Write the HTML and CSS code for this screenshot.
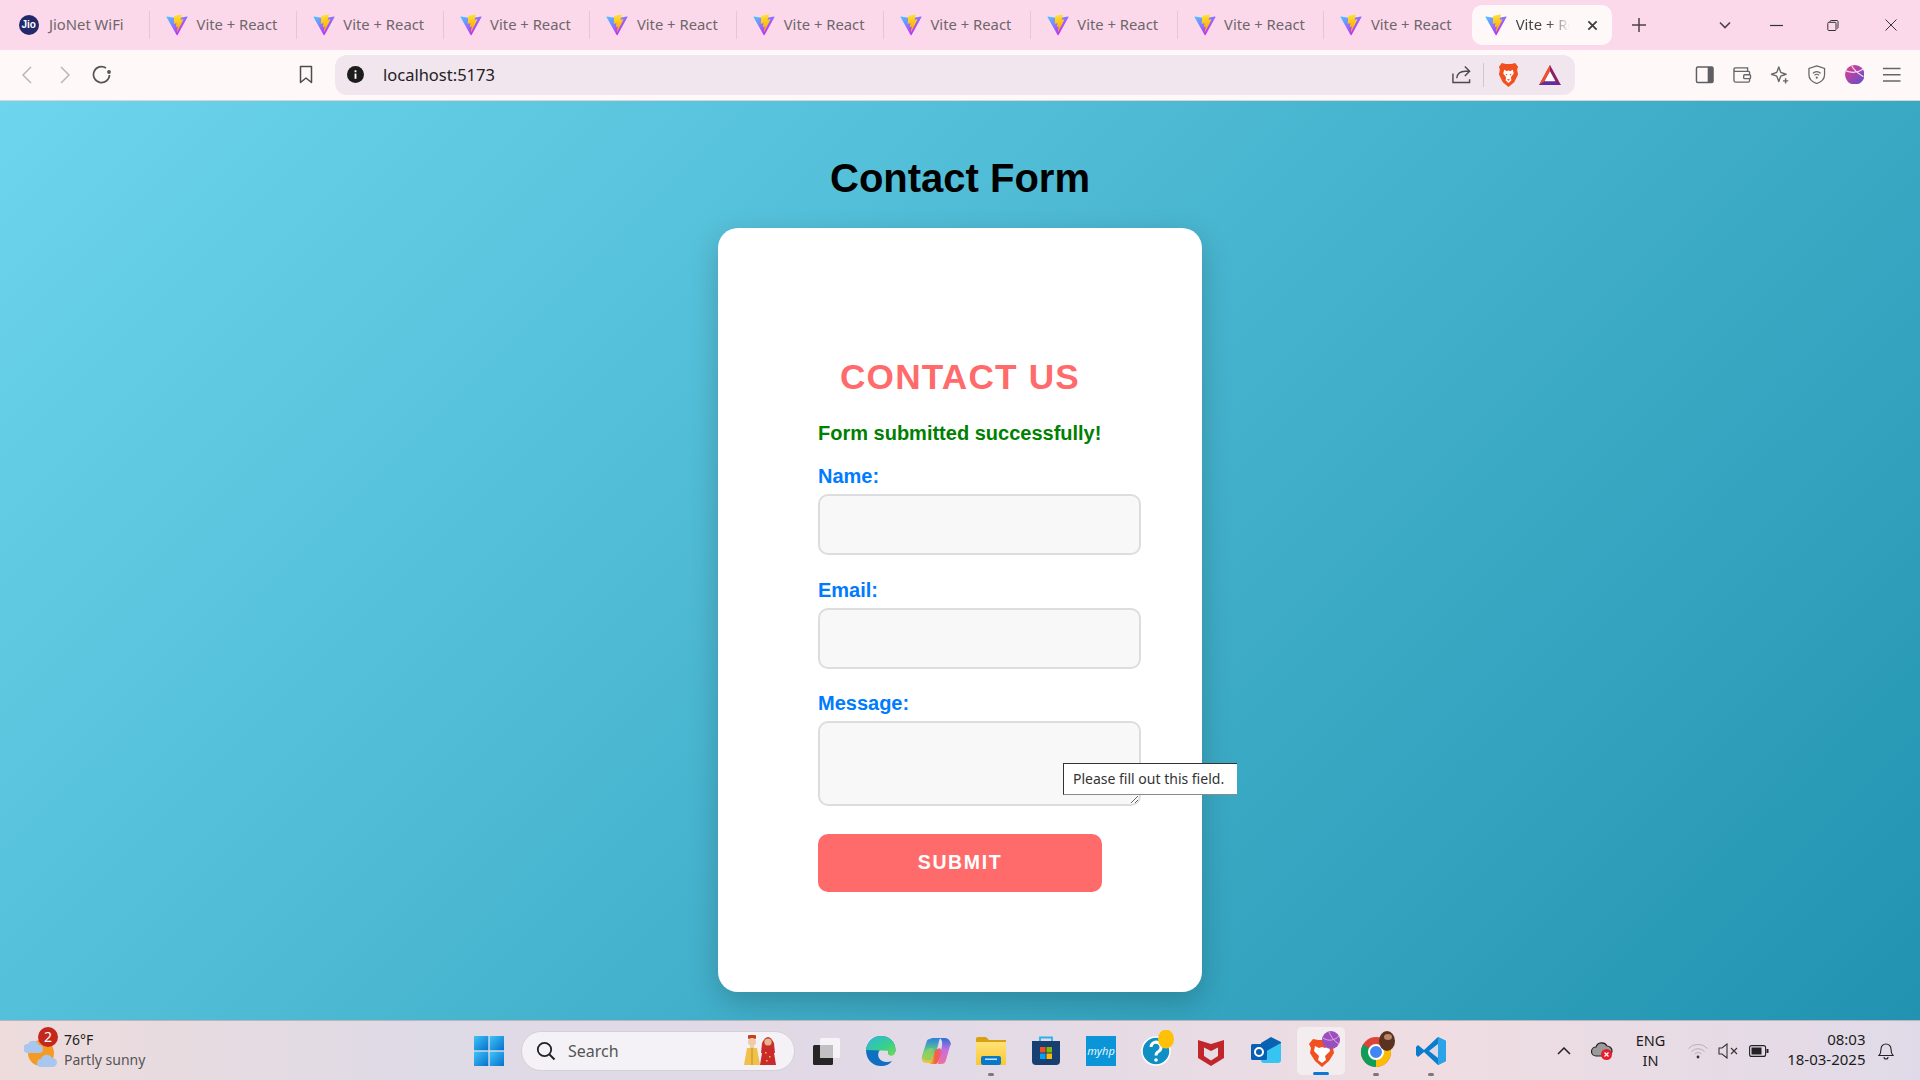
FILE: index.html
```
<!DOCTYPE html>
<html lang="en">
<head>
<meta charset="utf-8">
<title>Vite + React</title>
<link rel="stylesheet" href="styles.css">
</head>
<body>
<svg class="defs" width="0" height="0" aria-hidden="true">
  <defs>
    <linearGradient id="vA" gradientUnits="userSpaceOnUse" x1="6" y1="33" x2="235" y2="344"><stop offset="0" stop-color="#41d1ff"/><stop offset="1" stop-color="#bd34fe"/></linearGradient>
    <linearGradient id="vB" gradientUnits="userSpaceOnUse" x1="194" y1="8" x2="236" y2="292"><stop offset="0" stop-color="#ffea83"/><stop offset=".08" stop-color="#ffdd35"/><stop offset="1" stop-color="#ffa800"/></linearGradient>
    <linearGradient id="edgeG" x1="0" y1="0" x2="1" y2="1"><stop offset="0" stop-color="#2ab7e0"/><stop offset=".6" stop-color="#39d08a"/><stop offset="1" stop-color="#7ad94a"/></linearGradient>
    <linearGradient id="copL" x1="0" y1="0" x2="0" y2="1"><stop offset="0" stop-color="#2b7fe0"/><stop offset=".5" stop-color="#5fc88a"/><stop offset="1" stop-color="#f2c53d"/></linearGradient>
    <linearGradient id="copR" x1="0" y1="0" x2="0" y2="1"><stop offset="0" stop-color="#2a6fd8"/><stop offset=".45" stop-color="#c56ee0"/><stop offset="1" stop-color="#f0709a"/></linearGradient>
    <linearGradient id="copB" x1="0" y1="0" x2="1" y2="0"><stop offset="0" stop-color="#f2c53d"/><stop offset=".5" stop-color="#f4613a"/><stop offset="1" stop-color="#e85a9a"/></linearGradient>
    <linearGradient id="winG" x1="0" y1="0" x2="1" y2="1"><stop offset="0" stop-color="#3fc4f8"/><stop offset="1" stop-color="#0670cc"/></linearGradient>
    <linearGradient id="avG" x1="0" y1="0" x2="1" y2="1"><stop offset="0" stop-color="#e83e8c"/><stop offset="1" stop-color="#5a4fd0"/></linearGradient>
    <linearGradient id="folG" x1="0" y1="0" x2="0" y2="1"><stop offset="0" stop-color="#ffe27a"/><stop offset="1" stop-color="#fbc72e"/></linearGradient>
    <symbol id="vite" viewBox="0 0 410 404">
      <path d="M399.641 59.5246L215.643 388.545C211.844 395.338 202.084 395.378 198.228 388.618L10.5817 59.5563C6.38087 52.1896 12.6802 43.2665 21.0281 44.7586L205.223 77.6824C206.398 77.8924 207.601 77.8904 208.776 77.6763L389.119 44.8058C397.439 43.2894 403.768 52.1434 399.641 59.5246Z" fill="url(#vA)"/>
      <path d="M292.965 1.5744L156.801 28.2552C154.563 28.6937 152.906 30.5903 152.771 32.8664L144.395 174.33C144.198 177.662 147.258 180.248 150.51 179.498L188.42 170.749C191.967 169.931 195.172 173.055 194.443 176.622L183.18 231.775C182.422 235.487 185.907 238.661 189.532 237.56L212.947 230.446C216.577 229.344 220.065 232.527 219.297 236.242L201.398 322.875C200.278 328.294 207.486 331.249 210.492 326.603L212.5 323.5L323.454 102.072C325.312 98.3645 322.108 94.137 318.036 94.9228L279.014 102.454C275.347 103.161 272.227 99.746 273.262 96.1583L298.731 7.86689C299.767 4.27314 296.636 0.855181 292.965 1.5744Z" fill="url(#vB)"/>
    </symbol>
  </defs>
</svg>

<header class="tabstrip">
  <div class="tab tab-first">
    <svg class="fav" viewBox="0 0 20 20"><circle cx="10" cy="10" r="10" fill="#23286b"/></svg>
    <span class="jio">Jio</span>
    <span class="tab-title tab-title-jio">JioNet WiFi</span>
  </div>
  <div class="tab"><svg class="fav"><use href="#vite"/></svg><span class="tab-title">Vite + React</span></div>
  <div class="tab"><svg class="fav"><use href="#vite"/></svg><span class="tab-title">Vite + React</span></div>
  <div class="tab"><svg class="fav"><use href="#vite"/></svg><span class="tab-title">Vite + React</span></div>
  <div class="tab"><svg class="fav"><use href="#vite"/></svg><span class="tab-title">Vite + React</span></div>
  <div class="tab"><svg class="fav"><use href="#vite"/></svg><span class="tab-title">Vite + React</span></div>
  <div class="tab"><svg class="fav"><use href="#vite"/></svg><span class="tab-title">Vite + React</span></div>
  <div class="tab"><svg class="fav"><use href="#vite"/></svg><span class="tab-title">Vite + React</span></div>
  <div class="tab"><svg class="fav"><use href="#vite"/></svg><span class="tab-title">Vite + React</span></div>
  <div class="tab tab-last"><svg class="fav"><use href="#vite"/></svg><span class="tab-title">Vite + React</span></div>
  <div class="tab-active">
    <svg class="fav"><use href="#vite"/></svg>
    <span class="tab-title tab-title-active">Vite + React</span>
    <svg class="tab-x" viewBox="0 0 12 12"><path d="M1.5 1.5 L10.5 10.5 M10.5 1.5 L1.5 10.5" stroke="#3c3c3c" stroke-width="1.9" fill="none"/></svg>
  </div>
  <svg class="newtab" viewBox="0 0 14 14"><path d="M7 0 V14 M0 7 H14" stroke="#4a4347" stroke-width="1.5"/></svg>
  <div class="winctl">
    <svg class="wc wc-chev" viewBox="0 0 12 8"><path d="M1 1.5 L6 6.5 L11 1.5" stroke="#4a4347" stroke-width="1.6" fill="none"/></svg>
    <svg class="wc wc-min" viewBox="0 0 12 12"><path d="M0 6 H12" stroke="#333" stroke-width="1.1"/></svg>
    <svg class="wc wc-max" viewBox="0 0 12 12"><path d="M3 2.5 V2 a1.2 1.2 0 0 1 1.2 -1 H10 a1.2 1.2 0 0 1 1 1 V8 a1.2 1.2 0 0 1 -1 1 M1.8 2.8 H8 a1 1 0 0 1 1 1 V10 a1 1 0 0 1 -1 1 H1.8 a1 1 0 0 1 -1 -1 V3.8 a1 1 0 0 1 1 -1 Z" stroke="#333" stroke-width="1" fill="none"/></svg>
    <svg class="wc wc-close" viewBox="0 0 12 12"><path d="M0.5 0.5 L11.5 11.5 M11.5 0.5 L0.5 11.5" stroke="#333" stroke-width="1" fill="none"/></svg>
  </div>
</header>

<nav class="toolbar">
  <svg class="tb tb-back" viewBox="0 0 10 18"><path d="M9 1 L1 9 L9 17" stroke="#b9b3b5" stroke-width="1.5" fill="none"/></svg>
  <svg class="tb tb-fwd" viewBox="0 0 10 18"><path d="M1 1 L9 9 L1 17" stroke="#b9b3b5" stroke-width="1.5" fill="none"/></svg>
  <svg class="tb tb-reload" viewBox="0 0 20 20"><path d="M17.5 10 A8 8 0 1 1 14 3" stroke="#555" stroke-width="1.7" fill="none"/><circle cx="17" cy="7" r="1.9" fill="#555"/></svg>
  <svg class="tb tb-mark" viewBox="0 0 14 18"><path d="M1.5 1 H12.5 V17 L7 12.5 L1.5 17 Z" stroke="#4d4d4d" stroke-width="1.5" fill="none" stroke-linejoin="round"/></svg>
  <div class="omnibox">
    <svg class="info" viewBox="0 0 18 18"><circle cx="9" cy="9" r="9" fill="#1c1c1c"/><rect x="8" y="8" width="2" height="5.5" fill="#fff"/><rect x="8" y="4.6" width="2" height="2" fill="#fff"/></svg>
    <span class="url">localhost:5173</span>
    <svg class="share" viewBox="0 0 20 20"><path d="M1 9 V18.500 H18.500 V15 M5 14 C5.500 9 9 6.500 14 6.500 H18 M13.500 1.500 L18.500 6.500 L13.500 11.500" stroke="#4a4a4a" stroke-width="1.500" fill="none"/></svg>
    <span class="omni-sep"></span>
    <svg class="brave" viewBox="0 0 22 26"><path d="M4 1 L8 2 H14 L18 1 L21 5 L20 8 L21 13 L17 21 L11 26 L5 21 L1 13 L2 8 L1 5 Z" fill="#f1501f"/><path d="M6.500 8 L9.500 9.500 L11 8.500 L12.500 9.500 L15.500 8 L16.500 12 L13.500 16 L14 19 L11 22 L8 19 L8.500 16 L5.500 12 Z" fill="#fff"/><path d="M9.300 18 H12.700 L11 19.700 Z M8 12 L10 13 L8.500 14 Z M14 12 L12 13 L13.500 14 Z" fill="#f1501f"/></svg>
    <svg class="bat" viewBox="0 0 24 22"><path d="M12 0 L24 22 H0 Z" fill="#8f1f66"/><path d="M12 0 L0 22 L6 18 L12 7 Z" fill="#f0502c"/><path d="M0 22 L6 18 H18 L24 22 Z" fill="#5f2fa0"/><path d="M12 7 L18 18 H6 Z" fill="#fff"/></svg>
  </div>
  <div class="tb-right">
    <svg class="tr" viewBox="0 0 20 20"><rect x="1.500" y="2" width="17" height="16" rx="1.500" stroke="#5f5f63" stroke-width="1.500" fill="none"/><rect x="13" y="2" width="5.500" height="16" fill="#5f5f63"/></svg>
    <svg class="tr" viewBox="0 0 20 20"><path d="M2 5 V16 a1.500 1.500 0 0 0 1.500 1.500 H17 a1.500 1.500 0 0 0 1 -1.500 V7.500 a1 1 0 0 0 -1 -1 H3.500 a1.500 1.500 0 0 1 -1.500 -1.500 a1.500 1.500 0 0 1 1.500 -2 H16 V6.500" stroke="#66666a" stroke-width="1.400" fill="none"/><rect x="12" y="10" width="7" height="4" rx="1" stroke="#66666a" stroke-width="1.400" fill="#fff8f8"/></svg>
    <svg class="tr" viewBox="0 0 20 20"><path d="M9 2 L11 7.500 L16.500 9.500 L11 11.500 L9 17 L7 11.500 L1.500 9.500 L7 7.500 Z" stroke="#66666a" stroke-width="1.400" fill="none" stroke-linejoin="round"/><path d="M16 13.500 V19 M13.300 16.300 H18.700" stroke="#66666a" stroke-width="1.500"/></svg>
    <svg class="tr" viewBox="0 0 20 20"><path d="M10 1 L18 3.500 V10 C18 14.500 14.500 17.500 10 19 C5.500 17.500 2 14.500 2 10 V3.500 Z" stroke="#66666a" stroke-width="1.300" fill="none"/><path d="M6 8.500 a5.500 5.500 0 0 1 8 0 M7.700 10.600 a3 3 0 0 1 4.600 0" stroke="#66666a" stroke-width="1.200" fill="none"/><circle cx="10" cy="13" r="1.100" fill="#66666a"/></svg>
    <svg class="tr" viewBox="0 0 20 20"><circle cx="10" cy="10" r="10" fill="url(#avG)"/><path d="M1 6 C6 8 13 8 19 4 M7 1 C9 5 14 9 19 12" stroke="#fbdcea" stroke-width="1.200" fill="none"/></svg>
    <svg class="tr" viewBox="0 0 20 20"><path d="M1 3.500 H19 M1 10 H19 M1 16.500 H19" stroke="#66666a" stroke-width="1.500"/></svg>
  </div>
</nav>

<main class="page">
  <h1 class="page-title">Contact Form</h1>
  <section class="card">
    <h2 class="card-title">CONTACT US</h2>
    <p class="success">Form submitted successfully!</p>
    <form class="form">
      <div class="field">
        <label class="label" for="f-name">Name:</label>
        <input class="input" id="f-name" type="text">
      </div>
      <div class="field">
        <label class="label" for="f-email">Email:</label>
        <input class="input" id="f-email" type="email">
      </div>
      <div class="field field-msg">
        <label class="label" for="f-msg">Message:</label>
        <div class="msg-wrap">
          <textarea class="input textarea" id="f-msg"></textarea>
          <div class="tooltip">Please fill out this field.</div>
        </div>
      </div>
      <button class="submit" type="button">SUBMIT</button>
    </form>
  </section>
</main>

<footer class="taskbar">
  <div class="weather">
    <div class="w-icon">
      <svg viewBox="0 0 34 36" width="34" height="36">
        <circle cx="17" cy="20" r="13" fill="#f59a23"/>
        <path d="M3 20 a4.500 4.500 0 0 1 1 -9 a6 6 0 0 1 11 1 a4 4 0 0 1 0 8 Z" fill="#a9c6ee"/>
        <path d="M17 34 a4 4 0 0 1 0 -8 a6 6 0 0 1 11 -1 a4.500 4.500 0 0 1 1 9 Z" fill="#a9c6ee"/>
      </svg>
      <span class="w-badge">2</span>
    </div>
    <div class="w-text">
      <div class="w-temp">76°F</div>
      <div class="w-desc">Partly sunny</div>
    </div>
  </div>
  <div class="tb-center">
    <svg class="winlogo" viewBox="0 0 30 30">
      <rect x="0" y="0" width="14.300" height="14.300" fill="url(#winG)"/>
      <rect x="15.700" y="0" width="14.300" height="14.300" fill="url(#winG)"/>
      <rect x="0" y="15.700" width="14.300" height="14.300" fill="url(#winG)"/>
      <rect x="15.700" y="15.700" width="14.300" height="14.300" fill="url(#winG)"/>
    </svg>
    <div class="search">
      <svg class="s-icon" viewBox="0 0 20 20"><circle cx="8.500" cy="8.500" r="6.700" stroke="#222" stroke-width="1.800" fill="none"/><path d="M13.500 13.500 L18.500 18.500" stroke="#222" stroke-width="2"/></svg>
      <span class="s-text">Search</span>
      <svg class="s-art" viewBox="0 0 34 32">
        <rect x="5" y="0" width="8" height="4" rx="1" fill="#c8401a"/>
        <circle cx="9" cy="7" r="4" fill="#f0cba8"/>
        <rect x="7" y="11" width="4" height="3" fill="#f0cba8"/>
        <path d="M4 13 H14 L17 30 H1 Z" fill="#efc04a"/>
        <path d="M8.300 13 H9.700 V30 H8.300 Z" fill="#d89a2a"/>
        <path d="M19 8 Q25 -4 31 8 L32 18 H18 Z" fill="#c93030"/>
        <circle cx="25" cy="7" r="3.600" fill="#e8b48e"/>
        <path d="M20 12 H30 L33 30 H17 Z" fill="#cb2a2a"/>
        <path d="M22 17 h1.500 v1.500 h-1.500 Z M26 21 h1.500 v1.500 h-1.500 Z M23 25 h1.500 v1.500 h-1.500 Z" fill="#f2c24a"/>
      </svg>
    </div>
    <div class="apps">
      <div class="app">
        <svg viewBox="0 0 30 30" class="ai"><rect x="2" y="9" width="20" height="20" rx="1.500" fill="#252525"/><rect x="9" y="2" width="20" height="20" rx="1.500" fill="#f5f3f5"/><rect x="9" y="9" width="13" height="13" fill="#c2c0c2"/></svg>
      </div>
      <div class="app">
        <svg viewBox="0 0 30 30" class="ai"><path d="M29.500 15 C30 6 23 0 15 0 C7 0 1 6 0 14 C0 24 7 30 15 30 C20 30 24 28 26 25 C21 27 15 26 13 22 C11 18 13 13 17 12 C21 12 23 15 22 18 H28 Z" fill="#0f6fc0"/><path d="M0 14 C3 5 15 3 22 9 C26 12 29 14 29 16 C29 20 24 21 22 18 C23 15 21 12 17 12 C10 10 4 10 0 14 Z M0 14 C1 6 7 0 15 0 C23 0 30 6 29.500 15 Z" fill="url(#edgeG)"/></svg>
      </div>
      <div class="app">
        <svg viewBox="0 0 30 30" class="ai"><path d="M9 3 C7 3 6 4 5.500 6 L1 20 C0 24 2 27 5 27 H10 C12 27 13 26 13.500 24 L18 5 C18.500 3 19 2 21 2 H11 Z" fill="url(#copL)"/><path d="M21 2 H24 C27 2 29 4 30 8 L29 10 L25 24 C24 27 23 28 20 28 H17 L21 10 C21.500 6 21 4 19 2 Z" fill="url(#copR)"/><path d="M14 14 L19 12 L21 16 L17.500 25 C17 27 16 28 14 28 H8 C10 27 11 26 11.500 24 Z" fill="url(#copB)"/><path d="M2 18 C4 14 7 12 12 12 L10 24 H4 Z" fill="#8ed25a" opacity=".75"/></svg>
      </div>
      <div class="app">
        <svg viewBox="0 0 30 30" class="ai"><path d="M0 2.500 Q0 1 2 1 H10 L13 4 H30 V10 H0 Z" fill="#d9a012"/><path d="M0 6 H30 V29 H0 Z" fill="url(#folG)"/><rect x="5" y="20" width="20" height="9" rx="2" fill="#0a78c8"/><rect x="9" y="22.500" width="12" height="1.500" fill="#bfe3fa"/></svg>
        <span class="dot"></span>
      </div>
      <div class="app">
        <svg viewBox="0 0 30 30" class="ai"><path d="M9 6 V1.500 H21 V6" stroke="#27b4ec" stroke-width="1.800" fill="none"/><path d="M1 5 H29 V25 a4 4 0 0 1 -4 4 H5 a4 4 0 0 1 -4 -4 Z" fill="#173f72"/><rect x="9" y="11" width="5.500" height="5.500" fill="#f25022"/><rect x="15.500" y="11" width="5.500" height="5.500" fill="#7fba00"/><rect x="9" y="17.500" width="5.500" height="5.500" fill="#01a4ef"/><rect x="15.500" y="17.500" width="5.500" height="5.500" fill="#ffb902"/></svg>
      </div>
      <div class="app">
        <div class="myhp">myhp</div>
      </div>
      <div class="app">
        <svg viewBox="0 0 34 36" class="ai ai-help"><circle cx="15" cy="21" r="14" fill="#0f8fc4" stroke="#fff" stroke-width="1.500"/><path d="M10 17 a5 5 0 1 1 7.500 4.500 c-2 1 -2.500 2 -2.500 4" stroke="#fff" stroke-width="3" fill="none"/><circle cx="15" cy="30" r="1.800" fill="#fff"/><ellipse cx="25" cy="9" rx="8" ry="9.500" fill="#ffc107"/></svg>
      </div>
      <div class="app">
        <svg viewBox="0 0 30 30" class="ai"><path d="M2 4 L15 8 L28 4 V22 L15 30 L2 22 Z" fill="#c0272d"/><path d="M8 11.500 L15 15 L22 11.500 V20 L15 24.500 L8 20 Z" fill="#e6dde4"/></svg>
      </div>
      <div class="app">
        <svg viewBox="0 0 30 30" class="ai"><path d="M10 7 L20 1 L30 6 V13 L10 24 Z" fill="#0a62b0"/><path d="M10 18 L30 7 V24 a3 3 0 0 1 -3 3 H13 a3 3 0 0 1 -3 -3 Z" fill="#36c4f2"/><rect x="0" y="8" width="16" height="16" rx="1.500" fill="#0a5fb4"/><circle cx="8" cy="16" r="4" stroke="#fff" stroke-width="2" fill="none"/></svg>
      </div>
      <div class="app app-active">
        <svg viewBox="0 0 36 36" class="ai ai-wide"><path d="M8 8 L13 9 H21 L26 8 L30 13 L28 17 L29 22 L24 30 L17 36 L10 30 L5 22 L6 17 L4 13 Z" fill="#f1501f"/><path d="M10 15 L14 17 L17 16 L20 17 L24 15 L25 20 L20 25 L21 29 L17 32 L13 29 L14 25 L9 20 Z" fill="#fff"/><circle cx="26" cy="9" r="9" fill="#9a4fc0"/><path d="M18 7 C24 11 30 9 34 5 M24 1 C26 6 30 11 34 13" stroke="#e6a3d8" stroke-width="1" fill="none"/></svg>
        <span class="dash"></span>
      </div>
      <div class="app">
        <svg viewBox="0 0 36 36" class="ai ai-wide"><circle cx="16" cy="21" r="15" fill="#db4437"/><path d="M16 21 L29 13.500 A15 15 0 0 1 16 36 Z" fill="#fbbc05"/><path d="M16 21 L16 36 A15 15 0 0 1 3 13.500 Z" fill="#0f9d58"/><circle cx="16" cy="21" r="7" fill="#4285f4" stroke="#fff" stroke-width="2"/><ellipse cx="27" cy="10" rx="8" ry="10" fill="#5a3320"/><ellipse cx="28" cy="6" rx="4" ry="3" fill="#b8876a"/></svg>
        <span class="dot"></span>
      </div>
      <div class="app">
        <svg viewBox="0 0 30 30" class="ai"><path d="M22 1 L30 5 V25 L22 29 L8 16 L2 21 L0 19 V11 L2 9 L8 14 Z" fill="#0a7ccc"/><path d="M22 8 L13 15 L22 22 Z" fill="#dfd9e6"/><path d="M22 1 L30 5 V25 L22 29 Z" fill="#2ba3ea"/></svg>
        <span class="dot"></span>
      </div>
    </div>
  </div>
  <div class="tray">
    <svg class="t-chev" viewBox="0 0 14 8"><path d="M1 7 L7 1 L13 7" stroke="#222" stroke-width="1.500" fill="none"/></svg>
    <svg class="t-cloud" viewBox="0 0 22 20"><path d="M5 15 a4.500 4.500 0 0 1 0 -9 a6 6 0 0 1 11 -1 a4.500 4.500 0 0 1 0 10 Z" fill="#9b9b9b" stroke="#222" stroke-width="1.200"/><circle cx="15.500" cy="13.500" r="5.500" fill="#e81c2c"/><path d="M13.500 11.500 L17.500 15.500 M17.500 11.500 L13.500 15.500" stroke="#fff" stroke-width="1.300"/></svg>
    <div class="t-lang"><div>ENG</div><div>IN</div></div>
    <svg class="t-wifi" viewBox="0 0 20 16"><path d="M0.500 5.500 a13 13 0 0 1 19 0 M3.500 8.500 a9 9 0 0 1 13 0 M6.500 11 a5 5 0 0 1 7 0" stroke="#b5b2b8" stroke-width="1" fill="none"/><circle cx="10" cy="14" r="1.400" fill="#333"/></svg>
    <svg class="t-vol" viewBox="0 0 20 16"><path d="M1 5 H4 L9 1 V15 L4 11 H1 Z" stroke="#333" stroke-width="1.100" fill="none"/><path d="M13 5 L19 11 M19 5 L13 11" stroke="#333" stroke-width="1.100"/></svg>
    <svg class="t-bat" viewBox="0 0 20 12"><rect x="0.600" y="0.600" width="16" height="10.800" rx="2" stroke="#222" stroke-width="1.100" fill="none"/><rect x="2.500" y="2.500" width="10" height="7" fill="#222"/><rect x="17.500" y="4" width="2" height="4" fill="#222"/></svg>
    <div class="t-clock"><div>08:03</div><div>18-03-2025</div></div>
    <svg class="t-bell" viewBox="0 0 16 18"><path d="M1 13.500 C2.500 12 3 11 3 7 a5 5 0 0 1 10 0 C13 11 13.500 12 15 13.500 Z M6 15 a2 2 0 0 0 4 0" stroke="#222" stroke-width="1.100" fill="none"/></svg>
  </div>
</footer>
</body>
</html>
```

FILE: styles.css
```
* { box-sizing: border-box; }
html, body { margin: 0; padding: 0; height: 100%; }
body {
  width: 1920px;
  height: 1080px;
  overflow: hidden;
  display: flex;
  flex-direction: column;
  font-family: "Liberation Sans", Arial, sans-serif;
}
.defs { position: absolute; }

/* Tab strip */
.tabstrip {
  height: 50px;
  flex: none;
  display: flex;
  align-items: center;
  background: #fbd9ea;
  font-family: "Noto Sans", sans-serif;
}
.tab {
  width: 146.800px;
  height: 28px;
  display: flex;
  align-items: center;
  padding-left: 16px;
  border-right: 1px solid #e4c6d6;
  flex: none;
}
.tab-first { width: 150px; padding-left: 19px; position: relative; }
.tab-last { border-right: none; }
.fav { width: 22px; height: 22px; flex: none; }
.tab-first .fav { width: 20px; height: 20px; }
.jio {
  position: absolute;
  left: 21.500px;
  top: 8px;
  font: bold 10px/12px "Liberation Sans", sans-serif;
  color: #fff;
}
.tab-title {
  margin-left: 8.500px;
  padding-bottom: 2px;
  font-size: 14.800px;
  color: #6e666b;
  white-space: nowrap;
}
.tab-first .tab-title { margin-left: 10px; }
.tab-active {
  margin-left: 1px;
  width: 140px;
  height: 40px;
  background: #fff8f8;
  border-radius: 10px;
  display: flex;
  align-items: center;
  padding-left: 13px;
  flex: none;
  position: relative;
}
.tab-title-active {
  width: 54px;
  overflow: hidden;
  color: #444;
  -webkit-mask-image: linear-gradient(90deg, #000 60%, transparent);
  mask-image: linear-gradient(90deg, #000 60%, transparent);
}
.tab-x { width: 11px; height: 11px; margin-left: 17.500px; }
.newtab { width: 14px; height: 14px; margin-left: 20px; flex: none; }
.winctl { display: flex; align-items: center; flex: 1; }
.wc { flex: none; }
.wc-chev { width: 12px; height: 8px; margin-left: 73px; }
.wc-min { width: 13px; height: 13px; margin-left: 39px; }
.wc-max { width: 12px; height: 13px; margin-left: 44px; }
.wc-close { width: 12px; height: 12px; margin-left: 46px; }

/* Toolbar */
.toolbar {
  height: 51px;
  flex: none;
  display: flex;
  align-items: center;
  background: #fff8f8;
  border-bottom: 1px solid #d9d4d6;
  padding-bottom: 1px;
}
.tb { flex: none; }
.tb-back { width: 10px; height: 18px; margin-left: 22px; }
.tb-fwd { width: 10px; height: 18px; margin-left: 28px; }
.tb-reload { width: 20px; height: 20px; margin-left: 22px; }
.tb-mark { width: 14px; height: 19px; margin-left: 187px; }
.omnibox {
  margin-left: 22px;
  width: 1240px;
  height: 40px;
  background: #f1e5ee;
  border-radius: 12px;
  display: flex;
  align-items: center;
  flex: none;
}
.info { width: 17px; height: 17px; margin-left: 12px; flex: none; }
.url {
  margin-left: 19px;
  font: 16.500px "Noto Sans", sans-serif;
  color: #222;
  flex: 1;
}
.share { width: 19px; height: 19px; flex: none; }
.omni-sep { width: 1px; height: 24px; background: #cfc6cd; margin-left: 12px; flex: none; }
.brave { width: 21px; height: 25px; margin-left: 14px; flex: none; }
.bat { width: 22px; height: 20px; margin-left: 20px; margin-right: 14px; flex: none; }
.tb-right { display: flex; align-items: center; margin-left: 119.500px; gap: 18px; }
.tr { width: 19.500px; height: 19.500px; flex: none; }

/* Page */
.page {
  flex: 1;
  min-height: 0;
  background: linear-gradient(135deg, #6dd5ed, #2193b0);
  display: flex;
  flex-direction: column;
  align-items: center;
  position: relative;
}
.page-title {
  margin: 54px 0 0;
  font-size: 40px;
  line-height: 46px;
  font-weight: 700;
  color: #000;
}
.card {
  margin-top: 27px;
  width: 484px;
  height: 764px;
  background: #fff;
  border-radius: 20px;
  box-shadow: 0 10px 30px rgba(0, 0, 0, 0.2);
  padding: 128px 100px 0;
}
.card-title {
  margin: 0;
  text-align: center;
  font-size: 35.200px;
  line-height: 41px;
  font-weight: 700;
  letter-spacing: 1.200px;
  color: #ff6b6b;
  white-space: nowrap;
}
.success {
  margin: 25px 0 0;
  font-size: 20px;
  line-height: 23px;
  font-weight: 700;
  color: green;
  white-space: nowrap;
}
.form { margin-top: 20px; }
.field { margin-bottom: 23.500px; }
.field-msg { margin-bottom: 28px; }
.label {
  display: block;
  font-size: 20px;
  line-height: 23px;
  font-weight: 700;
  color: #007bff;
  margin-bottom: 6px;
}
.input {
  display: block;
  width: 323px;
  height: 61px;
  border: 2px solid #ddd;
  border-radius: 10px;
  background: #f8f8f8;
  padding: 20px;
  font-size: 16px;
  outline: none;
}
.msg-wrap { position: relative; }
.textarea { height: 85px; resize: vertical; }
.tooltip {
  position: absolute;
  left: 245px;
  top: 42px;
  width: 174px;
  height: 32px;
  background: #fff;
  border: 1px solid #333;
  border-right: none;
  border-bottom-color: #8a8a8a;
  font: 14px/30px "Noto Sans", sans-serif;
  color: #333;
  padding-left: 9px;
  white-space: nowrap;
}
.submit {
  display: block;
  width: 284px;
  height: 58px;
  border: none;
  border-radius: 10px;
  background: #ff6b6b;
  color: #fff;
  font: 700 19.500px "Liberation Sans", sans-serif;
  letter-spacing: 1.600px;
  padding: 0 0 2px;
}

/* Taskbar */
.taskbar {
  height: 60px;
  flex: none;
  display: flex;
  align-items: center;
  position: relative;
  border-top: 1px solid #b8b5bc;
  background: linear-gradient(90deg, #eedcdc 0%, #dedae6 22%, #e2dae6 50%, #efdde2 75%, #e0dae8 100%);
  font-family: "Noto Sans", sans-serif;
}
.weather { display: flex; align-items: center; width: 474px; flex: none; padding-left: 24px; }
.w-icon { position: relative; width: 34px; height: 36px; flex: none; }
.w-badge {
  position: absolute;
  left: 14px;
  top: -6px;
  width: 20px;
  height: 20px;
  border-radius: 50%;
  background: #c4281c;
  color: #fff;
  font: 14px/20px "Noto Sans", sans-serif;
  text-align: center;
}
.w-text { margin-left: 6px; font-size: 14px; line-height: 20px; padding-bottom: 1px; }
.w-temp { color: #1c1c1c; }
.w-desc { color: #555; }
.tb-center { display: flex; align-items: center; flex: none; }
.winlogo { width: 30px; height: 30px; flex: none; }
.search {
  margin-left: 17px;
  width: 274px;
  height: 40px;
  border-radius: 20px;
  background: #f4f2f6;
  border: 1px solid #d4d0d8;
  display: flex;
  align-items: center;
  padding-left: 14px;
  flex: none;
}
.s-icon { width: 20px; height: 20px; flex: none; }
.s-text { margin-left: 12px; font-size: 16px; color: #555; flex: 1; }
.s-art { width: 34px; height: 32px; margin-right: 17px; flex: none; }
.apps { display: flex; align-items: center; margin-left: 3.500px; }
.app {
  width: 55px;
  height: 48px;
  display: flex;
  align-items: center;
  justify-content: center;
  position: relative;
  flex: none;
  border-radius: 5px;
}
.app-active { background: #f3edf0; width: 48px; margin: 0 3.500px; }
.ai { width: 30px; height: 30px; }
.ai-help { width: 34px; height: 36px; margin-top: -5px; margin-left: 4px; }
.ai-wide { width: 36px; height: 36px; margin-top: -4px; margin-left: 4px; }
.myhp {
  width: 30px;
  height: 30px;
  background: #0a95d8;
  color: #e8f6fd;
  font: italic 11px/30px "Noto Sans", sans-serif;
  text-align: center;
}
.dot {
  position: absolute;
  bottom: -1px;
  left: 50%;
  margin-left: -3px;
  width: 6px;
  height: 3px;
  border-radius: 2px;
  background: #7a7780;
}
.dash {
  position: absolute;
  bottom: 0;
  left: 50%;
  margin-left: -8px;
  width: 16px;
  height: 3px;
  border-radius: 2px;
  background: #0a78d4;
}
.tray { display: flex; align-items: center; flex: 1; font-size: 14.500px; color: #1c1c1c; }
.t-chev { width: 14px; height: 8px; margin-left: 98px; flex: none; }
.t-cloud { width: 22px; height: 20px; margin-left: 20px; flex: none; }
.t-lang { width: 40px; margin-left: 18px; text-align: center; line-height: 20px; flex: none; padding-bottom: 2px; }
.t-wifi { width: 20px; height: 16px; margin-left: 17px; flex: none; }
.t-vol { width: 20px; height: 16px; margin-left: 10px; flex: none; }
.t-bat { width: 20px; height: 12px; margin-left: 11px; flex: none; }
.t-clock { width: 80px; margin-left: 17px; text-align: right; line-height: 20px; flex: none; white-space: nowrap; font-size: 15px; padding-bottom: 4px; }
.t-bell { width: 16px; height: 18px; margin-left: 12px; flex: none; }
```
